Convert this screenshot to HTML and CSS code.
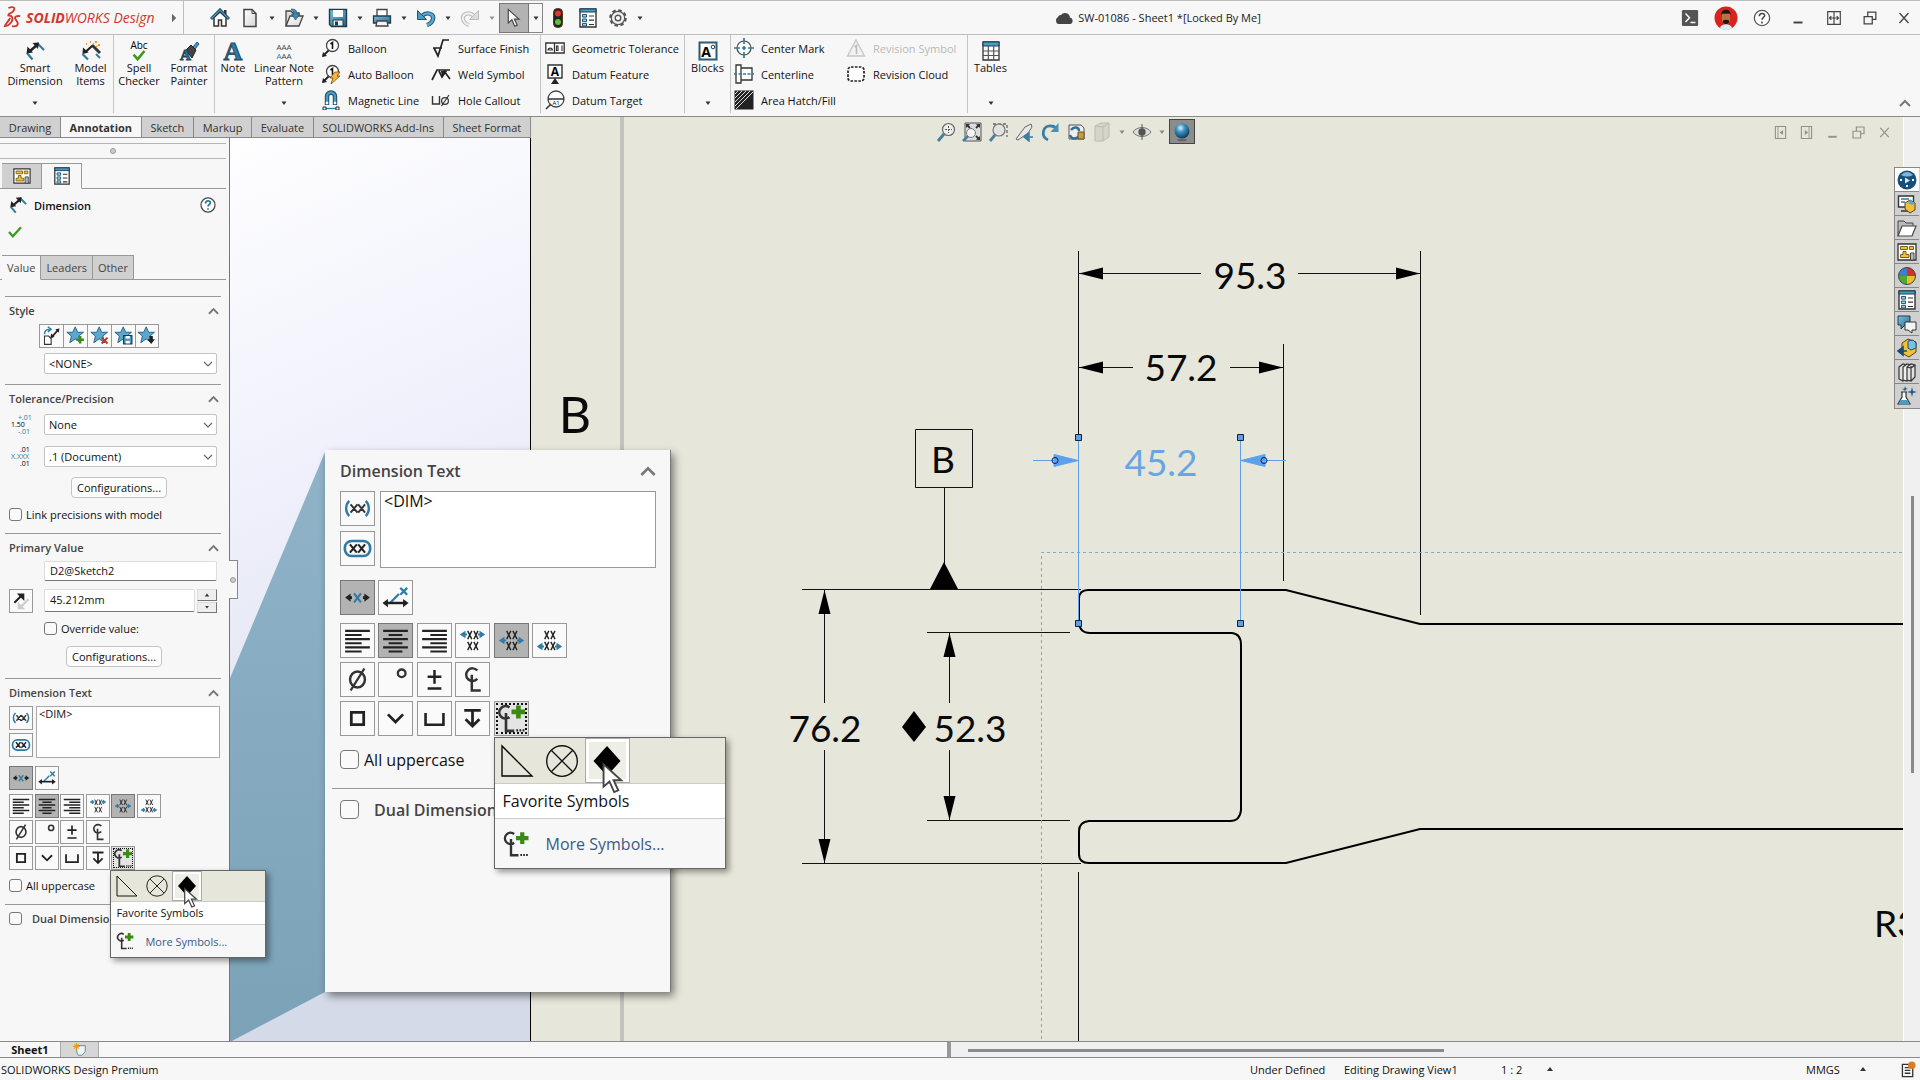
FILE: index.html
```
<!DOCTYPE html>
<html lang="en">
<head>
<meta charset="utf-8">
<title>SOLIDWORKS Design</title>
<link rel="stylesheet" href="styles.css">
</head>
<body>
<svg class="sprite" aria-hidden="true">
  <symbol id="i-caret" viewBox="0 0 8 8"><path d="M1.500 2.500h5L4 6z" fill="#333"/></symbol>
  <symbol id="i-up" viewBox="0 0 8 8"><path d="M1 6h6L4 2z" fill="#333"/></symbol>
  <symbol id="i-chev-up" viewBox="0 0 12 8"><path d="M1 7l5-5 5 5" fill="none" stroke="#777" stroke-width="2"/></symbol>
  <symbol id="i-chev-down" viewBox="0 0 10 6"><path d="M1 1l4 4 4-4" fill="none" stroke="#666" stroke-width="1.200"/></symbol>
  <symbol id="i-home" viewBox="0 0 20 20"><path d="M4 9.500V18h4.500v-6h3v6H16V9.500L10 4z" fill="#fff" stroke="#333" stroke-width="1.500"/><path d="M14 2h2.500v5L14 5z" fill="#333"/><path d="M1 11l9-9 9 9" fill="none" stroke="#1f3f55" stroke-width="3"/><path d="M1.500 10.500L10 2l8.500 8.500" fill="none" stroke="#4a9cc5" stroke-width="1.200"/></symbol>
  <symbol id="i-new" viewBox="0 0 20 20"><path d="M4 1.500h8l4 4v13H4z" fill="url(#paper)" stroke="#444" stroke-width="1.500"/><path d="M12 1.500v4h4" fill="none" stroke="#444"/></symbol>
  <symbol id="i-open" viewBox="0 0 20 20"><path d="M2 18V3h5l2 2h6v3" fill="#ddd" stroke="#444" stroke-width="1.300"/><path d="M2 18L6 8h13l-4 10z" fill="url(#paper)" stroke="#444" stroke-width="1.300"/><path d="M7 1c4 0 6 1 6 5h3l-4.500 6L7.500 6H10c0-2-1-3-3-5z" fill="#3c88b0" stroke="#1b4a66" stroke-width=".6"/></symbol>
  <symbol id="i-save" viewBox="0 0 20 20"><path d="M1.500 1.500h17v17h-15l-2-2z" fill="url(#blueGrad)" stroke="#1e3c50" stroke-width="1.400"/><path d="M5 2h10v7H5z" fill="#fff"/><path d="M5 12h10v6H5z" fill="#eee" stroke="#1e3c50"/><path d="M7 13.500h3v4H7z" fill="#1e3c50"/></symbol>
  <symbol id="i-print" viewBox="0 0 20 20"><path d="M5 1.500h10V9H5z" fill="#fff" stroke="#444" stroke-width="1.300"/><path d="M1.500 8h17v7h-17z" fill="url(#blueGrad)" stroke="#1e3c50" stroke-width="1.300"/><path d="M5 13h10l1 5H4z" fill="#f4f4f4" stroke="#444" stroke-width="1.300"/></symbol>
  <symbol id="i-undo" viewBox="0 0 20 20"><path d="M6 8c5-5 12-2 11 3-.5 3-3 5-6 6" fill="none" stroke="#1e5573" stroke-width="4.400"/><path d="M6 8c5-5 12-2 11 3-.5 3-3 5-6 6" fill="none" stroke="#5aa9d0" stroke-width="2.400"/><path d="M1.500 2.500v9h9z" fill="#4a9cc5" stroke="#1e5573"/></symbol>
  <symbol id="i-redo" viewBox="0 0 20 20"><path d="M14 8C9 3 2 6 3 11c.5 3 3 5 6 6" fill="none" stroke="#bbb" stroke-width="4"/><path d="M14 8C9 3 2 6 3 11c.5 3 3 5 6 6" fill="none" stroke="#eee" stroke-width="2"/><path d="M18.500 2.500v9h-9z" fill="#ddd" stroke="#bbb"/></symbol>
  <symbol id="i-cursor" viewBox="0 0 20 28"><path d="M2 2v19l5-4.500 4 9 3.500-1.500-4-8.500H17z" fill="#fff" stroke="#444" stroke-width="1.600"/></symbol>
  <symbol id="i-light" viewBox="0 0 20 20"><rect x="5.500" y=".5" width="9" height="19" rx="4" fill="#222" stroke="#5a3a20"/><circle cx="10" cy="5.500" r="3" fill="#e8322c"/><circle cx="10" cy="14" r="3" fill="#5cc23c"/></symbol>
  <symbol id="i-list" viewBox="0 0 20 20"><path d="M2 1h16v18H2z" fill="#fff" stroke="#333" stroke-width="1.400"/><path d="M2 1h16v3H2z" fill="#4a9cc5" stroke="#1e3c50"/><path d="M4.500 6.500h4v2.600h-4zM4.500 11h4v2.600h-4zM4.500 15.400h4V18h-4z" fill="#9fd3ec" stroke="#1e5573"/><path d="M11 8h5M11 12.200h5M11 16.500h5" stroke="#333" stroke-width="1.200"/></symbol>
  <symbol id="i-gear" viewBox="0 0 20 20"><circle cx="10" cy="10" r="7.500" fill="none" stroke="#555" stroke-width="2.600" stroke-dasharray="3.400 2.490"/><circle cx="10" cy="10" r="6.700" fill="#f2f2f2" stroke="#555" stroke-width="1.200"/><circle cx="10" cy="10" r="2.800" fill="#fff" stroke="#555" stroke-width="1.400"/></symbol>
  <symbol id="i-cloud" viewBox="0 0 20 14"><path d="M4 13a4 4 0 010-7 3 3 0 013-2 5 5 0 019 2.500A3.400 3.400 0 0116.500 13z" fill="#444"/></symbol>
  <symbol id="i-term" viewBox="0 0 20 20"><rect x="1" y="1" width="18" height="18" rx="1.500" fill="#555"/><path d="M5 5l4.500 4.700L5 14.500M10.500 15H16" fill="none" stroke="#fff" stroke-width="1.600"/></symbol>
  <symbol id="i-avatar" viewBox="0 0 24 24"><circle cx="12" cy="12" r="11.500" fill="#d8231f"/><path d="M6 22c1-5 11-5 12 0-3 2.500-9 2.500-12 0z" fill="#d9eef5"/><path d="M8 8h8v6c0 5-8 5-8 0z" fill="#b9733f"/><path d="M7.500 9c-1-7 10-7 9 0l-1-1.500h-7zM9 14.500c2-1 4-1 6 0v2c-2 2-4 2-6 0z" fill="#1d1715"/></symbol>
  <symbol id="i-help" viewBox="0 0 20 20"><circle cx="10" cy="10" r="8.500" fill="#fff" stroke="#555" stroke-width="1.400"/><path d="M7 8c0-4 6-4 6-.8C13 9.400 10 9.300 10 12M10 14v2" fill="none" stroke="#444" stroke-width="1.700"/></symbol>
  <symbol id="i-helpblue" viewBox="0 0 20 20"><circle cx="10" cy="10" r="8.800" fill="#fff" stroke="#444" stroke-width="1.500"/><path d="M7 8c0-4 6-4 6-.8C13 9.400 10 9.300 10 12M10 14v2" fill="none" stroke="#2f7ba3" stroke-width="2.200"/></symbol>
  <symbol id="i-min" viewBox="0 0 20 20"><path d="M5 15h10" stroke="currentColor" stroke-width="2.200"/></symbol>
  <symbol id="i-span" viewBox="0 0 20 20"><path d="M3 3h14v14H3zM10 3v14M5 10h10M7 8l-2 2 2 2M13 8l2 2-2 2" fill="none" stroke="currentColor" stroke-width="1.300"/></symbol>
  <symbol id="i-restore" viewBox="0 0 20 20"><path d="M7.500 8V3.500h9v8H12M3.500 8.500h9v8h-9z" fill="none" stroke="currentColor" stroke-width="1.400"/></symbol>
  <symbol id="i-close" viewBox="0 0 20 20"><path d="M5 4.500l10 11M15 4.500l-10 11" stroke="currentColor" stroke-width="1.500"/></symbol>
  <symbol id="i-dockl" viewBox="0 0 20 20"><path d="M4 3h12v14H4z" fill="none" stroke="currentColor" stroke-width="1.300"/><path d="M7 3v14" stroke="currentColor"/><path d="M13 7v6l-4-3z" fill="currentColor"/></symbol>
  <symbol id="i-dockr" viewBox="0 0 20 20"><path d="M4 3h12v14H4z" fill="none" stroke="currentColor" stroke-width="1.300"/><path d="M13 3v14" stroke="currentColor"/><path d="M8 7v6l4-3z" fill="currentColor"/></symbol>
  <symbol id="i-smartdim" viewBox="0 0 20 20"><path d="M7.500 18.500L2 12M12 2l7 7" stroke="#2f7ba3" stroke-width="2.200"/><path d="M5 10L12 4" stroke="#222" stroke-width="2.500"/><path d="M1.500 12.500l1-7 5.500 6zM14 1.500l-6.500.5 5.500 6z" fill="#222"/></symbol>
  <symbol id="i-model" viewBox="0 0 20 20"><path d="M7 18.500L1.500 13" stroke="#2f7ba3" stroke-width="2.200"/><path d="M11 4l8 8" stroke="#333" stroke-width="3"/><path d="M4.500 11L11 5" stroke="#222" stroke-width="2.300"/><path d="M1.500 13l.5-6.500 5.500 5z" fill="#222"/><path d="M5 3h1M9 1h1M14 1h2M17 4h2M15 5l1 1M12 2.500l1 1" stroke="#e59a2a" stroke-width="1.800"/><path d="M15 13l4 4" stroke="#2f7ba3" stroke-width="2"/></symbol>
  <symbol id="i-balloon" viewBox="0 0 20 20"><path d="M8 12l-6 6" stroke="#222" stroke-width="1.800"/><path d="M1 19l1-5 4 4z" fill="#222"/><circle cx="11.500" cy="7.500" r="6" fill="#fff" stroke="#444" stroke-width="1.300"/><path d="M9.500 6l2-1.500v6.500" fill="none" stroke="#111" stroke-width="1.600"/></symbol>
  <symbol id="i-bolt" viewBox="0 0 20 20"><path d="M14 8h5l-3 4h3l-9 8 2-6h-3z" fill="#f5b73a" stroke="#7a4a10" stroke-width=".8"/></symbol>
  <symbol id="i-magnet" viewBox="0 0 20 20"><path d="M6 15V6.500a4 4 0 018 0V15" fill="none" stroke="#1e4a63" stroke-width="4.400"/><path d="M6 14V6.500a4 4 0 018 0V14" fill="none" stroke="#4a9cc5" stroke-width="2.400"/><path d="M4.800 13h2.400M12.800 13h2.400" stroke="#fff" stroke-width="2.400"/><path d="M4 18.500h12" stroke="#2f7ba3" stroke-width="1.300"/><path d="M2 17h3v3H2zM15 17h3v3h-3z" fill="#fff" stroke="#222"/></symbol>
  <symbol id="i-surface" viewBox="0 0 20 20"><path d="M2 10h9M3 10l4 8 5-16h6" fill="none" stroke="#222" stroke-width="1.700"/></symbol>
  <symbol id="i-weld" viewBox="0 0 20 20"><path d="M1 16L6 6h13M8 7l3 6 4-6M13 7l6 8" fill="none" stroke="#222" stroke-width="1.700"/><path d="M10 7l1 6 5-6z" fill="#222"/></symbol>
  <symbol id="i-hole" viewBox="0 0 20 20"><path d="M1.500 6v8h7V6" fill="none" stroke="#333" stroke-width="1.400"/><circle cx="14" cy="11" r="3.400" fill="none" stroke="#333" stroke-width="1.200"/><path d="M10.500 16L18 5" stroke="#333" stroke-width="1.200"/></symbol>
  <symbol id="i-center" viewBox="0 0 20 20"><circle cx="10" cy="10" r="7" fill="#fff" stroke="#444" stroke-width="1.200"/><path d="M10 0v6M10 8v4M10 14v6M0 10h6M8 10h4M14 10h6" stroke="#2f7ba3" stroke-width="1.700"/></symbol>
  <symbol id="i-centerline" viewBox="0 0 20 20"><path d="M2 1h5v18H2zM7 4h11v12H7z" fill="#fff" stroke="#333" stroke-width="1.300"/><path d="M0 10h20" stroke="#2f7ba3" stroke-width="1.500" stroke-dasharray="3 1.500"/></symbol>
  <symbol id="i-hatch" viewBox="0 0 20 20"><path d="M.5.500h19v19H.5z" fill="#222"/><path d="M1 4l3-3M1 8l7-7M1 12L12 1M1 16L16 1M2 19L19 2" stroke="#ddd" stroke-width="1"/></symbol>
  <symbol id="i-revsym" viewBox="0 0 20 20"><path d="M10 2l8.500 16h-17z" fill="#f2f2f2" stroke="#c8c8c8" stroke-width="1.400"/><path d="M8.500 9l2-1.500V16" fill="none" stroke="#bbb" stroke-width="1.600"/></symbol>
  <symbol id="i-revcloud" viewBox="0 0 20 20"><rect x="2" y="3" width="16" height="14" rx="3" fill="#fff" stroke="#222" stroke-width="1.700" stroke-dasharray="2.600 1.300"/></symbol>
  <symbol id="i-table" viewBox="0 0 20 20"><path d="M2 1h16v18H2z" fill="#fff" stroke="#333" stroke-width="1.300"/><path d="M2 1h16v4H2z" fill="#4a9cc5" stroke="#1e3c50"/><path d="M2 10h16M2 14.500h16M7.300 5v14M12.700 5v14" stroke="#555" stroke-width="1.200"/></symbol>
  <symbol id="i-tree" viewBox="0 0 20 20"><path d="M1 2h18v16H1z" fill="#fff" stroke="#333" stroke-width="1.300"/><path d="M3.500 4.500h7v3h-7zM12.500 4.500h4v3h-4zM6 9.500h3v3h3v3H3.500v-3H6z" fill="#f2c230" stroke="#6b5310" stroke-width=".9"/><path d="M13.500 11H17v7h-3.500z" fill="#bbb" stroke="#444"/></symbol>
  <symbol id="i-check" viewBox="0 0 16 14"><path d="M1 7l4.500 5L15 1.500" fill="none" stroke="#3d9a1e" stroke-width="2.600"/></symbol>
  <symbol id="i-star" viewBox="0 0 24 24"><path d="M11 1l3 6.500h7L15.500 12l2 8L11 15.500 4.500 20l2-8L1 7.500h7z" fill="#5ba8cf" stroke="#1e5573"/></symbol>

  <symbol id="d-paren" viewBox="0 0 24 24"><path d="M6 6.500c-3 3-3 8 0 11M18 6.500c3 3 3 8 0 11" fill="none" stroke="#2f7ba3" stroke-width="1.700"/><path d="M7 9l5 6M12 9l-5 6M12.500 9l5 6M17.500 9l-5 6" stroke="#333" stroke-width="1.400"/></symbol>
  <symbol id="d-oval" viewBox="0 0 24 24"><rect x="2.800" y="6.500" width="18.400" height="11" rx="5" fill="none" stroke="#2f7ba3" stroke-width="1.900"/><path d="M6.500 9l5 6M11.500 9l-5 6M12.500 9l5 6M17.500 9l-5 6" stroke="#222" stroke-width="1.500"/></symbol>
  <symbol id="d-inline" viewBox="0 0 24 24"><path d="M9.500 9l5 6.500M14.500 9l-5 6.500" stroke="#2f7ba3" stroke-width="1.500"/><path d="M5 12h3M16 12h3" stroke="#222" stroke-width="2"/><path d="M3 12l4-3v6zM21 12l-4-3v6z" fill="#222"/></symbol>
  <symbol id="d-leader" viewBox="0 0 24 24"><path d="M15.500 5l5 5M20.500 5l-5 5M8 16l6.500-6.500" stroke="#2f7ba3" stroke-width="1.600"/><path d="M5 16h14" stroke="#222" stroke-width="1.800"/><path d="M2.500 16l4-3v6zM21.500 16l-4-3v6z" fill="#222"/></symbol>
  <symbol id="d-left" viewBox="0 0 24 24"><path d="M3 5h18M3 8h12M3 11h18M3 14h12M3 17h18M3 20h12" stroke="#222" stroke-width="1.600"/></symbol>
  <symbol id="d-mid" viewBox="0 0 24 24"><path d="M3 5h18M7 8h10M3 11h18M7 14h10M3 17h18M7 20h10" stroke="#222" stroke-width="1.600"/></symbol>
  <symbol id="d-right" viewBox="0 0 24 24"><path d="M3 5h18M9 8h12M3 11h18M9 14h12M3 17h18M9 20h12" stroke="#222" stroke-width="1.600"/></symbol>
  <symbol id="d-xx" viewBox="0 0 24 24"><path d="M8.500 5l3 6M11.500 5l-3 6M13 5l3 6M16 5l-3 6M8.500 13l3 6M11.500 13l-3 6M13 13l3 6M16 13l-3 6" stroke="#222" stroke-width="1"/></symbol>
  <symbol id="d-arrows" viewBox="0 0 24 24"><path d="M3.500 12l3-2v4zM20.500 12l-3-2v4z" fill="#2f7ba3" stroke="#2f7ba3" stroke-width=".8"/><path d="M6 12h2M16 12h2" stroke="#2f7ba3" stroke-width="1.400"/></symbol>
  <symbol id="d-dia" viewBox="0 0 24 24"><ellipse cx="12" cy="12" rx="5.400" ry="5.800" fill="none" stroke="#333" stroke-width="1.800"/><path d="M7 20L17 4" stroke="#333" stroke-width="1.700"/></symbol>
  <symbol id="d-deg" viewBox="0 0 24 24"><circle cx="16.500" cy="7.500" r="2.800" fill="none" stroke="#333" stroke-width="1.700"/></symbol>
  <symbol id="d-pm" viewBox="0 0 24 24"><path d="M12 5v10M7 10h10M7 18.500h10" stroke="#222" stroke-width="1.800"/></symbol>
  <symbol id="d-cl" viewBox="0 0 24 24"><path d="M15.500 5.500a4.600 4.600 0 100 6M11.500 8.500V20h6.500" fill="none" stroke="#333" stroke-width="1.800"/></symbol>
  <symbol id="d-sq" viewBox="0 0 24 24"><path d="M7.500 7.500h9v9h-9z" fill="none" stroke="#222" stroke-width="2"/></symbol>
  <symbol id="d-vee" viewBox="0 0 24 24"><path d="M6.500 9l5.500 5.500L17.500 9" fill="none" stroke="#222" stroke-width="2"/></symbol>
  <symbol id="d-cup" viewBox="0 0 24 24"><path d="M5.500 8v8.500h13V8" fill="none" stroke="#222" stroke-width="1.900"/></symbol>
  <symbol id="d-depth" viewBox="0 0 24 24"><path d="M6 6h12M12 6v11M7 12.500l5 5 5-5" fill="none" stroke="#222" stroke-width="2"/></symbol>
  <symbol id="d-clplus" viewBox="0 0 24 24"><path d="M10.500 4a4.500 4.500 0 100 7M8 8v13h6" fill="none" stroke="#333" stroke-width="1.900"/><path d="M15.500 20.700h6" stroke="#222" stroke-width="1.600" stroke-dasharray="1.300 1"/><path d="M17 2.500v9.500M12 7.200h10" stroke="#3b8a14" stroke-width="3.400"/></symbol>
  <symbol id="d-tri" viewBox="0 0 24 24"><path d="M2 2v20h20z" fill="none" stroke="#000" stroke-width=".9"/></symbol>
  <symbol id="d-cross" viewBox="0 0 24 24"><circle cx="12" cy="12" r="10.200" fill="none" stroke="#111" stroke-width=".9"/><path d="M5 5l14 14M19 5L5 19" stroke="#111" stroke-width=".9"/></symbol>
  <symbol id="d-diamond" viewBox="0 0 24 24"><path d="M12 2l9 10-9 10-9-10z" fill="#000"/></symbol>

  <symbol id="v-zoom" viewBox="0 0 20 20"><path d="M8 12l-6 7" stroke="#4a7f9c" stroke-width="3"/><circle cx="12.500" cy="7.500" r="6" fill="#eee" stroke="#666" stroke-width="1.200"/><path d="M12.500 4v7M9 7.500h7" stroke="#555" stroke-dasharray="2 1"/></symbol>
  <symbol id="v-fit" viewBox="0 0 20 20"><path d="M3 1h16v18H3z" fill="#ddd" stroke="#555"/><path d="M8 6L5 3M14 6l3-3M14 14l3 3" stroke="#333" stroke-width="1.800"/><path d="M4 2h4L4 6zM18 2h-4l4 4zM18 18h-4l4-4z" fill="#333"/><circle cx="9" cy="11" r="4.500" fill="#f3f3f3" stroke="#777"/><path d="M6 14l-5 5" stroke="#4a7f9c" stroke-width="2.600"/></symbol>
  <symbol id="v-area" viewBox="0 0 20 20"><path d="M5 2h14v13" fill="none" stroke="#666" stroke-width="1.300" stroke-dasharray="3 2"/><circle cx="11" cy="8" r="6" fill="#e2e2e2" stroke="#777" stroke-width="1.200"/><path d="M7 13l-5 6" stroke="#4a7f9c" stroke-width="2.800"/></symbol>
  <symbol id="v-prev" viewBox="0 0 20 20"><path d="M2 17l9-12 6-3 1 3-4 6-10 7z" fill="#e8e8e8" stroke="#666"/><path d="M19 15h-6M15 11l-5 4 5 4z" fill="#3c7ea3" stroke="#3c7ea3" stroke-width="1.500"/></symbol>
  <symbol id="v-rot" viewBox="0 0 20 20"><path d="M8 18C0 14 3 3 11 4c2 0 4 1 5 2.500" fill="none" stroke="#3c7ea3" stroke-width="2.800"/><path d="M18.500 1v9h-8z" fill="#4a8fb5"/></symbol>
  <symbol id="v-sheet" viewBox="0 0 20 20"><path d="M3 3h12l3 3v11H3z" fill="#eee" stroke="#555"/><path d="M5 8c3-4 8-3 8 1M13 14c-3 4-8 3-9-1" fill="none" stroke="#2f6f96" stroke-width="2.400"/><path d="M12 10h6v7h-6z" fill="#c79a45" stroke="#6e5320"/></symbol>
  <symbol id="v-box" viewBox="0 0 20 20"><path d="M3 4l6-3h8v14l-6 4H3z" fill="#d5d5ca" stroke="#bbb"/><path d="M11 5v14M3 4l8 1 6-4" fill="none" stroke="#bdbdb2"/></symbol>
  <symbol id="v-eye" viewBox="0 0 20 20"><path d="M1 10c4-6 14-6 18 0-4 6-14 6-18 0z" fill="#ddd" stroke="#777"/><circle cx="10" cy="10" r="3.700" fill="#555"/><path d="M10 2v16" stroke="#555"/></symbol>
  <symbol id="v-ball" viewBox="0 0 20 20"><circle cx="10" cy="9" r="7.500" fill="url(#ballGrad)"/><ellipse cx="10" cy="18" rx="5" ry="1.200" fill="#666"/></symbol>
  <symbol id="t-compass" viewBox="0 0 20 20"><circle cx="10" cy="10" r="9.500" fill="#174e7a"/><path d="M4 5c4-4 8-4 12 0-4 2-8 2-12 0z" fill="#7fb7dc"/><path d="M8 7.500l5 3-5 3z" fill="#cfe9fa"/><path d="M3 10h2M15 10h2M9 16h2" stroke="#fff" stroke-width="2"/></symbol>
  <symbol id="t-lib" viewBox="0 0 20 20"><path d="M1.500 2h15v11h-15zM4 17h7" fill="#fff" stroke="#333" stroke-width="1.400"/><path d="M4 5h8M4 8h4" stroke="#2f7ba3" stroke-width="1.400"/><path d="M8 9l5-3 5 3v7l-5 3-5-4z" fill="#efc13b" stroke="#5b4512"/><path d="M13 6l5 3-3 2-4-2z" fill="#5aa9d0"/></symbol>
  <symbol id="t-folder" viewBox="0 0 20 20"><path d="M1 18V3h6l2 2h7v3" fill="#bbb" stroke="#444"/><path d="M1 18L5 8h14l-4 10z" fill="#fff" stroke="#444" stroke-width="1.200"/></symbol>
  <symbol id="t-color" viewBox="0 0 20 20"><path d="M10 10V1.500a8.500 8.500 0 00-8.500 8.500z" fill="#3c7fd0"/><path d="M10 10V1.500a8.500 8.500 0 018.500 8.500z" fill="#d6302b"/><path d="M10 10h8.500a8.500 8.500 0 01-8.500 8.500z" fill="#e8c22d"/><path d="M10 10H1.500a8.500 8.500 0 008.500 8.500z" fill="#4fa82f"/><circle cx="10" cy="10" r="8.500" fill="none" stroke="#444"/></symbol>
  <symbol id="t-chat" viewBox="0 0 20 20"><path d="M1 2h12v9H8l-4 4v-4H1z" fill="url(#blueGrad)" stroke="#1e3c50"/><path d="M8 8h11v8h-4v3l-4-3H8z" fill="#f4f4f4" stroke="#333"/></symbol>
  <symbol id="t-part" viewBox="0 0 20 20"><path d="M5 5l6-4 8 3v10l-7 5-7-4z" fill="#efc13b" stroke="#5b4512"/><path d="M11 3l5-1 3 3v5l-5 2-3-2z" fill="#7cc0e0" stroke="#1e5573"/><path d="M10 13H5M6 9l-5 4 5 4z" fill="#1e4a6b" stroke="#1e4a6b" stroke-width="1.600"/></symbol>
  <symbol id="t-books" viewBox="0 0 20 20"><path d="M2 5l4-3 4 1v14l-4 2-4-2z" fill="#e2e2e2" stroke="#333" stroke-width="1.200"/><path d="M6 5l4-3 4 1v13l-4 3-4-1z" fill="#eee" stroke="#333" stroke-width="1.200"/><path d="M10 5l4-3 4 1v12l-4 4-4-1zM14 6v13M10 5l4 1 4-3" fill="#e2e2e2" stroke="#333" stroke-width="1.200"/></symbol>
  <symbol id="t-flask" viewBox="0 0 20 20"><path d="M5 6v5l-4 7h12l-4-7V6M4 6h6" fill="#fff" stroke="#333" stroke-width="1.200"/><path d="M3.500 14h7l2 4h-11z" fill="#4a9cc5"/><path d="M15 1l1 4 4 1-4 1-1 4-1-4-4-1 4-1zM8 0l.6 2L11 3l-2.400.5L8 6l-.6-2L5 3l2.400-.6z" fill="#1e5a86"/></symbol>
</svg>

<div class="app">
  <header class="titlebar">
    <div class="brand">
      <svg class="ds" viewBox="0 0 22 28" aria-hidden="true"><path d="M7 3c5-2 9-1 5 4-1 1-3 2-5 3M6 11c7 0 7 6 2 10-2 2-4 2-5 2 1-3 4-5 6-9M20 12c-6-1-7 2-4 5 3 4 1 7-5 6" fill="none" stroke="#d0382e" stroke-width="2"/></svg>
      <span class="wordmark"><b>SOLID</b>WORKS Design</span>
      <svg class="brand-arrow" viewBox="0 0 6 10" aria-hidden="true"><path d="M0 0l5 5-5 5z" fill="#666"/></svg>
    </div>
    <nav class="quick" aria-label="Quick access">
      <button class="q" aria-label="Home"><svg><use href="#i-home"/></svg></button>
      <button class="q" aria-label="New"><svg><use href="#i-new"/></svg></button><button class="qc" aria-label="New options"><svg><use href="#i-caret"/></svg></button>
      <button class="q" aria-label="Open"><svg><use href="#i-open"/></svg></button><button class="qc" aria-label="Open options"><svg><use href="#i-caret"/></svg></button>
      <button class="q" aria-label="Save"><svg><use href="#i-save"/></svg></button><button class="qc" aria-label="Save options"><svg><use href="#i-caret"/></svg></button>
      <button class="q" aria-label="Print"><svg><use href="#i-print"/></svg></button><button class="qc" aria-label="Print options"><svg><use href="#i-caret"/></svg></button>
      <button class="q" aria-label="Undo"><svg><use href="#i-undo"/></svg></button><button class="qc" aria-label="Undo options"><svg><use href="#i-caret"/></svg></button>
      <button class="q" aria-label="Redo" disabled><svg><use href="#i-redo"/></svg></button><button class="qc faded" aria-label="Redo options"><svg><use href="#i-caret"/></svg></button>
      <button class="q pressed" aria-label="Select"><svg><use href="#i-cursor"/></svg></button><button class="qc boxed" aria-label="Select options"><svg><use href="#i-caret"/></svg></button>
      <button class="q" aria-label="Rebuild"><svg><use href="#i-light"/></svg></button>
      <button class="q" aria-label="File properties"><svg><use href="#i-list"/></svg></button>
      <button class="q" aria-label="Options"><svg><use href="#i-gear"/></svg></button><button class="qc" aria-label="Options menu"><svg><use href="#i-caret"/></svg></button>
    </nav>
    <h1 class="doc-title"><svg><use href="#i-cloud"/></svg>SW-01086 - Sheet1 *[Locked By Me]</h1>
    <div class="window-tools">
      <button aria-label="Console"><svg><use href="#i-term"/></svg></button>
      <button class="avatar" aria-label="Account"><svg><use href="#i-avatar"/></svg></button>
      <button aria-label="Help"><svg><use href="#i-help"/></svg></button>
      <button aria-label="Minimize"><svg><use href="#i-min"/></svg></button>
      <button aria-label="Span displays"><svg><use href="#i-span"/></svg></button>
      <button aria-label="Restore"><svg><use href="#i-restore"/></svg></button>
      <button aria-label="Close"><svg><use href="#i-close"/></svg></button>
    </div>
  </header>

  <section class="ribbon" aria-label="Annotation commands">
    <div class="group g-dim">
      <button class="big w-l"><svg><use href="#i-smartdim"/></svg><span>Smart<br>Dimension</span><svg class="caret"><use href="#i-caret"/></svg></button>
      <button class="big w-t"><svg><use href="#i-model"/></svg><span>Model<br>Items</span></button>
    </div>
    <div class="group">
      <button class="big w-m"><svg viewBox="0 0 22 22"><text x="11" y="9" text-anchor="middle" class="g-text" font-size="11">Abc</text><path d="M5 15l4.500 5L17 11" fill="none" stroke="#3d9a1e" stroke-width="2.800"/></svg><span>Spell<br>Checker</span></button>
      <button class="big w-m"><svg viewBox="0 0 20 20"><path d="M14 6l4-5 2 2-4 5z" fill="#4a9cc5" stroke="#1e5573"/><path d="M7 9l5-5 5 5-4 8z" fill="#444" stroke="#222"/><text x="1" y="19" class="g-serif" font-size="15">A</text></svg><span>Format<br>Painter</span></button>
    </div>
    <div class="group">
      <button class="big w-s"><svg viewBox="0 0 20 20"><text x="10" y="19" text-anchor="middle" class="g-serif" font-size="26">A</text></svg><span>Note</span></button>
      <button class="big w-l"><svg viewBox="0 0 20 20"><g text-anchor="middle" class="g-text" font-size="8" fill="#444"><text x="10" y="9">AAA</text><text x="10" y="18"><tspan fill="#2f7ba3">A</tspan>AA</text></g></svg><span>Linear Note<br>Pattern</span><svg class="caret"><use href="#i-caret"/></svg></button>
      <div class="stack s-balloon">
        <button><svg><use href="#i-balloon"/></svg>Balloon</button>
        <button><svg><use href="#i-balloon"/><use href="#i-bolt"/></svg>Auto Balloon</button>
        <button><svg><use href="#i-magnet"/></svg>Magnetic Line</button>
      </div>
      <div class="stack s-surface">
        <button><svg><use href="#i-surface"/></svg>Surface Finish</button>
        <button><svg><use href="#i-weld"/></svg>Weld Symbol</button>
        <button><svg><use href="#i-hole"/></svg>Hole Callout</button>
      </div>
    </div>
    <div class="group">
      <div class="stack s-geo">
        <button><svg viewBox="0 0 20 20"><path d="M.8 5h18.400v10H.8zM9.500 5v10" fill="#fff" stroke="#333" stroke-width="1.300"/><path d="M3 12h4.500a2.300 2.300 0 00-4.500 0z" fill="none" stroke="#333" stroke-width="1.200"/><path d="M11.500 8h1.500v4.500h-1.500zM17 7.500v5.500" fill="none" stroke="#333" stroke-width="1.100"/></svg>Geometric Tolerance</button>
        <button><svg viewBox="0 0 20 20"><path d="M3 1h14v13H3z" fill="#fff" stroke="#333" stroke-width="1.400"/><path d="M10 14l4 6H6z" fill="#222"/><text x="10" y="12" text-anchor="middle" class="g-text g-bold" font-size="12">A</text></svg>Datum Feature</button>
        <button><svg viewBox="0 0 20 20"><circle cx="11" cy="9" r="8" fill="#fff" stroke="#444" stroke-width="1.300"/><path d="M3 9h16M6 14l-5 5" stroke="#333" stroke-width="1.500"/><text x="11" y="15" text-anchor="middle" class="g-text" font-size="6">A1</text></svg>Datum Target</button>
      </div>
    </div>
    <div class="group">
      <button class="big w-t"><svg viewBox="0 0 20 20"><path d="M1.500 1.500h17v17h-17z" fill="#fff" stroke="#2c5d78" stroke-width="2"/><text x="8" y="16" text-anchor="middle" class="g-text g-bold" font-size="14">A</text><circle cx="15" cy="6" r="1.800" fill="none" stroke="#333"/></svg><span>Blocks</span><svg class="caret"><use href="#i-caret"/></svg></button>
    </div>
    <div class="group">
      <div class="stack s-center">
        <button><svg><use href="#i-center"/></svg>Center Mark</button>
        <button><svg><use href="#i-centerline"/></svg>Centerline</button>
        <button><svg><use href="#i-hatch"/></svg>Area Hatch/Fill</button>
      </div>
      <div class="stack s-rev">
        <button disabled><svg><use href="#i-revsym"/></svg>Revision Symbol</button>
        <button><svg><use href="#i-revcloud"/></svg>Revision Cloud</button>
      </div>
    </div>
    <div class="group last">
      <button class="big w-t"><svg><use href="#i-table"/></svg><span>Tables</span><svg class="caret"><use href="#i-caret"/></svg></button>
    </div>
    <button class="collapse" aria-label="Collapse ribbon"><svg><use href="#i-chev-up"/></svg></button>
  </section>

  <main class="workspace">
    <svg class="canvas" aria-label="Drawing sheet">
      <defs>
        <linearGradient id="blueGrad" x1="0" y1="0" x2="1" y2="1"><stop offset="0" stop-color="#7fc0dd"/><stop offset="1" stop-color="#23668c"/></linearGradient>
        <radialGradient id="ballGrad" cx=".4" cy=".3" r=".7"><stop offset="0" stop-color="#d8f3ff"/><stop offset=".4" stop-color="#3c93c2"/><stop offset="1" stop-color="#0d3c5c"/></radialGradient>
        <linearGradient id="paper" x1="0" y1="0" x2="1" y2="1"><stop offset="0" stop-color="#fff"/><stop offset="1" stop-color="#d6d6d6"/></linearGradient>
        <linearGradient id="sky" x1="0" y1="0" x2=".25" y2="1"><stop offset=".1" stop-color="#fff"/><stop offset=".5" stop-color="#eff0fb"/><stop offset="1" stop-color="#d5dae8"/></linearGradient>
        <linearGradient id="wedge" x1="0" y1="0" x2="0" y2="1"><stop offset="0" stop-color="#90b3c8"/><stop offset="1" stop-color="#7ba2b7"/></linearGradient>
      </defs>
      <g transform="translate(0 -117)">
        <path d="M0 117h530v930H0z" fill="url(#sky)"/>
        <path d="M325 452L230 678v364l95-50z" fill="url(#wedge)"/>
        <path d="M530.500 117v930" stroke="#000"/>
        <path d="M622 117v930" stroke="#c2c2be" stroke-width="4"/>
        <g class="thin">
          <path d="M1078.500 251v186M1420.500 251v364M1283.500 344v237M1078.500 872v175"/>
          <path d="M1079 273.500h122M1298 273.500h122M1079 367.500h54M1230 367.500h53"/>
          <path d="M802 589.500h279M802 863.500h279M927 632.500h143M927 820.500h143"/>
          <path d="M824.500 590v113M824.500 750v113M949.500 633v70M949.500 750v70"/>
          <path d="M915.500 429.500h57v58h-57zM944.500 488v76"/>
        </g>
        <g class="solid">
          <path d="M1079 273.500l24-6v12zM1420 273.500l-24-6v12zM1079 367.500l24-6v12zM1283 367.500l-24-6v12z"/>
          <path d="M824.500 590l-6 24h12zM824.500 863l-6-24h12zM949.500 633l-6 24h12zM949.500 820l-6-24h12z"/>
          <path d="M944 562l14 27h-28zM914 711l12 16-12 15-12-15z"/>
        </g>
        <path d="M3000 552.500H1041.500V1047" fill="none" stroke="#7aaad6" stroke-dasharray="3 3"/>
        <path class="outline" d="M3000 624H1420L1286 590H1088Q1079 590 1079 599V623Q1080 633 1090 633H1232Q1241 634 1241 645V810Q1240 821 1230 821H1089Q1079 822 1079 831V854Q1079 863 1089 863H1286L1420 829H3000"/>
        <g class="picked">
          <path d="M1078.500 437v186M1240.500 437v186M1033 460.500h45M1241 460.500h45"/>
          <path class="pickfill" d="M1078 460.500l-24-6v12zM1241 460.500l24-6v12z"/>
          <circle cx="1055" cy="460.500" r="3"/><circle cx="1264" cy="460.500" r="3"/>
          <path class="handle" d="M1075.500 434.500h6v6h-6zM1237.500 434.500h6v6h-6zM1075.500 620.500h6v6h-6zM1237.500 620.500h6v6h-6z"/>
        </g>
        <g class="dimtxt">
          <text x="1250" y="289">95.3</text>
          <text x="1181" y="381">57.2</text>
          <text class="blue" x="1161" y="476">45.2</text>
          <text x="943" y="473">B</text>
          <text x="825" y="742">76.2</text>
          <text x="970" y="742">52.3</text>
          <text class="zone" x="575" y="433">B</text>
          <text class="start" x="1874" y="937">R3</text>
        </g>
      </g>
    </svg>

    <div class="topline">
      <nav class="cmd-tabs" aria-label="Command tabs">
        <button>Drawing</button><button class="on">Annotation</button><button>Sketch</button><button>Markup</button><button>Evaluate</button><button>SOLIDWORKS Add-Ins</button><button>Sheet Format</button>
      </nav>
      <div class="heads-up">
        <button aria-label="Zoom"><svg><use href="#v-zoom"/></svg></button>
        <button aria-label="Zoom to fit"><svg><use href="#v-fit"/></svg></button>
        <button aria-label="Zoom to area"><svg><use href="#v-area"/></svg></button>
        <button aria-label="Previous view"><svg><use href="#v-prev"/></svg></button>
        <button aria-label="Rotate view"><svg><use href="#v-rot"/></svg></button>
        <button aria-label="Sheet view"><svg><use href="#v-sheet"/></svg></button>
        <button aria-label="Display style"><svg><use href="#v-box"/></svg></button><button class="hc" aria-label="Display style menu"><svg><use href="#i-caret"/></svg></button>
        <button aria-label="Hide or show"><svg><use href="#v-eye"/></svg></button><button class="hc" aria-label="Hide or show menu"><svg><use href="#i-caret"/></svg></button>
        <button class="ball" aria-label="View settings"><svg><use href="#v-ball"/></svg></button>
      </div>
      <div class="doc-tools">
        <button aria-label="Previous pane"><svg><use href="#i-dockl"/></svg></button>
        <button aria-label="Next pane"><svg><use href="#i-dockr"/></svg></button>
        <button aria-label="Minimize document"><svg><use href="#i-min"/></svg></button>
        <button aria-label="Restore document"><svg><use href="#i-restore"/></svg></button>
        <button aria-label="Close document"><svg><use href="#i-close"/></svg></button>
      </div>
    </div>

    <aside class="panel">
      <div class="grip"><i></i></div>
      <div class="icon-tabs"><button aria-label="Feature tree"><svg><use href="#i-tree"/></svg></button><button class="on" aria-label="Properties"><svg><use href="#i-list"/></svg></button></div>
      <div class="panel-title"><svg><use href="#i-smartdim"/></svg><h2>Dimension</h2><button aria-label="Help"><svg><use href="#i-helpblue"/></svg></button></div>
      <button class="accept" aria-label="Accept"><svg><use href="#i-check"/></svg></button>
      <div class="value-tabs"><button class="on">Value</button><button>Leaders</button><button>Other</button></div>

      <section class="sec first">
        <h3>Style<svg><use href="#i-chev-up"/></svg></h3>
        <div class="style-btns">
          <button aria-label="Apply default"><svg viewBox="0 0 24 24"><path d="M3 12h5l3 3v7H3z" fill="#fff" stroke="#333" stroke-width="1.300"/><path d="M3 10c0-4 2-6 6-6M7 1l4 3-4 3" fill="none" stroke="#2f7ba3" stroke-width="1.700"/><path d="M12 13l7-8" stroke="#222" stroke-width="2"/><path d="M10 15l1-6 4 4zM21 3l-5 1 4 4z" fill="#222"/></svg></button>
          <button aria-label="Add style"><svg viewBox="0 0 24 24"><use href="#i-star"/><path d="M17 12v9M12.500 16.500h9" stroke="#3b8a14" stroke-width="3"/></svg></button>
          <button aria-label="Delete style"><svg viewBox="0 0 24 24"><use href="#i-star"/><path d="M14 14l7 7M21 14l-7 7" stroke="#c8321a" stroke-width="2.400"/></svg></button>
          <button aria-label="Save style"><svg viewBox="0 0 24 24"><use href="#i-star"/><path d="M11.500 11.500h10v10h-10z" fill="#4a9cc5" stroke="#1e3c50" stroke-width="1.400"/><path d="M14 12h5v3h-5zM14 18h5v3h-5z" fill="#fff"/></svg></button>
          <button aria-label="Load style"><svg viewBox="0 0 24 24"><use href="#i-star"/><path d="M17 12v5" stroke="#222" stroke-width="4"/><path d="M12.500 16h9L17 21.500z" fill="#222"/></svg></button>
        </div>
        <div class="pick style-pick"><select aria-label="Style"><option>&lt;NONE&gt;</option></select><svg><use href="#i-chev-down"/></svg></div>
      </section>

      <section class="sec tol">
        <h3>Tolerance/Precision<svg><use href="#i-chev-up"/></svg></h3>
        <div class="frow"><svg viewBox="0 0 20 20"><g class="g-text" font-size="7"><text x="7" y="5" fill="#2f7ba3">+.01</text><text x="0" y="12">1.50</text><text x="7" y="19" fill="#2f7ba3">-.01</text></g></svg><div class="pick"><select aria-label="Tolerance type"><option>None</option></select><svg><use href="#i-chev-down"/></svg></div></div>
        <div class="frow"><svg viewBox="0 0 20 20"><g class="g-text" font-size="7"><text x="9" y="5">.01</text><text x="0" y="12" fill="#2f7ba3">X.XXX</text><text x="9" y="19">.01</text></g></svg><div class="pick"><select aria-label="Unit precision"><option>.1 (Document)</option></select><svg><use href="#i-chev-down"/></svg></div></div>
        <button class="cfg cfg-a">Configurations...</button>
        <label class="tick"><input type="checkbox">Link precisions with model</label>
      </section>

      <section class="sec primary">
        <h3>Primary Value<svg><use href="#i-chev-up"/></svg></h3>
        <input class="txt" type="text" aria-label="Dimension name" value="D2@Sketch2">
        <div class="value-row">
          <button class="rev" aria-label="Reverse direction"><svg viewBox="0 0 24 24"><path d="M21 10l-9 9" stroke="#ccc" stroke-width="2.500"/><path d="M8 13v9h9z" fill="#ccc"/><path d="M4 14L13 5" stroke="#222" stroke-width="2.500"/><path d="M7 3h9v9z" fill="#222"/></svg></button>
          <input class="txt" type="text" aria-label="Dimension value" value="45.212mm">
          <div class="spin"><button aria-label="Increase"><svg><use href="#i-up"/></svg></button><button aria-label="Decrease"><svg><use href="#i-caret"/></svg></button></div>
        </div>
        <label class="tick over"><input type="checkbox">Override value:</label>
        <button class="cfg cfg-b">Configurations...</button>
      </section>

      <section class="sec dim">
        <h3>Dimension Text<svg><use href="#i-chev-up"/></svg></h3>
        <div class="edit"><div class="edit-btns"><button class="b" aria-label="Add parentheses"><svg><use href="#d-paren"/></svg></button><button class="b" aria-label="Inspection dimension"><svg><use href="#d-oval"/></svg></button></div><textarea aria-label="Dimension text">&lt;DIM&gt;</textarea></div>
        <div class="brow place"><button class="b on" aria-label="Center dimension"><svg><use href="#d-inline"/></svg></button><button class="b" aria-label="Offset text"><svg><use href="#d-leader"/></svg></button></div>
        <div class="brow"><button class="b" aria-label="Align left"><svg><use href="#d-left"/></svg></button><button class="b on" aria-label="Align center"><svg><use href="#d-mid"/></svg></button><button class="b" aria-label="Align right"><svg><use href="#d-right"/></svg></button><button class="b" aria-label="Top"><svg><use href="#d-xx"/><use href="#d-arrows" y="-4"/></svg></button><button class="b on" aria-label="Middle"><svg><use href="#d-xx"/><use href="#d-arrows"/></svg></button><button class="b" aria-label="Bottom"><svg><use href="#d-xx"/><use href="#d-arrows" y="4"/></svg></button></div>
        <div class="brow"><button class="b" aria-label="Diameter"><svg><use href="#d-dia"/></svg></button><button class="b" aria-label="Degree"><svg><use href="#d-deg"/></svg></button><button class="b" aria-label="Plus minus"><svg><use href="#d-pm"/></svg></button><button class="b" aria-label="Centerline"><svg><use href="#d-cl"/></svg></button></div>
        <div class="brow"><button class="b" aria-label="Square"><svg><use href="#d-sq"/></svg></button><button class="b" aria-label="Countersink"><svg><use href="#d-vee"/></svg></button><button class="b" aria-label="Counterbore"><svg><use href="#d-cup"/></svg></button><button class="b" aria-label="Depth"><svg><use href="#d-depth"/></svg></button>
          <div class="more"><button class="b focus" aria-label="More symbols"><svg><use href="#d-clplus"/></svg></button>
            <div class="popup"><div class="favs"><button aria-label="Right triangle"><svg><use href="#d-tri"/></svg></button><button aria-label="Crossed circle"><svg><use href="#d-cross"/></svg></button><button class="on" aria-label="Diamond"><svg><use href="#d-diamond"/></svg></button></div><p>Favorite Symbols</p><a href="#more"><svg><use href="#d-clplus"/></svg>More Symbols...</a><svg class="mouse" aria-hidden="true"><use href="#i-cursor"/></svg></div>
          </div></div>
        <label class="tick upper"><input type="checkbox">All uppercase</label>
      </section>
      <section class="sec dual"><label class="tick"><input type="checkbox">Dual Dimension</label></section>
      <button class="splitter" aria-label="Collapse panel"><i></i></button>
    </aside>

    <aside class="callout large">
      <section class="dim">
        <h3>Dimension Text<svg><use href="#i-chev-up"/></svg></h3>
        <div class="edit"><div class="edit-btns"><button class="b" aria-label="Add parentheses"><svg><use href="#d-paren"/></svg></button><button class="b" aria-label="Inspection dimension"><svg><use href="#d-oval"/></svg></button></div><textarea aria-label="Dimension text">&lt;DIM&gt;</textarea></div>
        <div class="brow place"><button class="b on" aria-label="Center dimension"><svg><use href="#d-inline"/></svg></button><button class="b" aria-label="Offset text"><svg><use href="#d-leader"/></svg></button></div>
        <div class="brow"><button class="b" aria-label="Align left"><svg><use href="#d-left"/></svg></button><button class="b on" aria-label="Align center"><svg><use href="#d-mid"/></svg></button><button class="b" aria-label="Align right"><svg><use href="#d-right"/></svg></button><button class="b" aria-label="Top"><svg><use href="#d-xx"/><use href="#d-arrows" y="-6"/></svg></button><button class="b on" aria-label="Middle"><svg><use href="#d-xx"/><use href="#d-arrows"/></svg></button><button class="b" aria-label="Bottom"><svg><use href="#d-xx"/><use href="#d-arrows" y="6"/></svg></button></div>
        <div class="brow"><button class="b" aria-label="Diameter"><svg><use href="#d-dia"/></svg></button><button class="b" aria-label="Degree"><svg><use href="#d-deg"/></svg></button><button class="b" aria-label="Plus minus"><svg><use href="#d-pm"/></svg></button><button class="b" aria-label="Centerline"><svg><use href="#d-cl"/></svg></button></div>
        <div class="brow"><button class="b" aria-label="Square"><svg><use href="#d-sq"/></svg></button><button class="b" aria-label="Countersink"><svg><use href="#d-vee"/></svg></button><button class="b" aria-label="Counterbore"><svg><use href="#d-cup"/></svg></button><button class="b" aria-label="Depth"><svg><use href="#d-depth"/></svg></button>
          <div class="more"><button class="b focus" aria-label="More symbols"><svg><use href="#d-clplus"/></svg></button>
            <div class="popup"><div class="favs"><button aria-label="Right triangle"><svg><use href="#d-tri"/></svg></button><button aria-label="Crossed circle"><svg><use href="#d-cross"/></svg></button><button class="on" aria-label="Diamond"><svg><use href="#d-diamond"/></svg></button></div><p>Favorite Symbols</p><a href="#more"><svg><use href="#d-clplus"/></svg>More Symbols...</a><svg class="mouse" aria-hidden="true"><use href="#i-cursor"/></svg></div>
          </div></div>
        <label class="tick upper"><input type="checkbox">All uppercase</label>
      </section>
      <section class="dual"><label class="tick"><input type="checkbox">Dual Dimension</label></section>
    </aside>

    <div class="vscroll"><i></i></div>
    <nav class="taskpane" aria-label="Task pane">
      <button class="on" aria-label="Platform"><svg><use href="#t-compass"/></svg></button>
      <button aria-label="Resources"><svg><use href="#t-lib"/></svg></button>
      <button aria-label="File explorer"><svg><use href="#t-folder"/></svg></button>
      <button aria-label="View palette"><svg><use href="#i-tree"/></svg></button>
      <button aria-label="Appearances"><svg><use href="#t-color"/></svg></button>
      <button aria-label="Custom properties"><svg><use href="#i-list"/></svg></button>
      <button aria-label="Forum"><svg><use href="#t-chat"/></svg></button>
      <button aria-label="Parts"><svg><use href="#t-part"/></svg></button>
      <button aria-label="Library"><svg><use href="#t-books"/></svg></button>
      <button aria-label="Labs"><svg><use href="#t-flask"/></svg></button>
    </nav>
  </main>

  <div class="sheetbar">
    <button class="sheet on">Sheet1</button>
    <button class="sheet add" aria-label="Add sheet"><svg viewBox="0 0 16 16"><path d="M4 3h10v7l-4 4H6c-2-3-2-6-2-11z" fill="#eef3f7" stroke="#5d7f95"/><path d="M4 0v8M0 4h8M1.500 1.500l5 5M6.500 1.500l-5 5" stroke="#ec9a24" stroke-width="1.300"/></svg></button>
    <div class="track"></div>
    <div class="hscroll"><i></i></div>
  </div>

  <footer class="status">
    <span class="st-app">SOLIDWORKS Design Premium</span>
    <span class="st-def">Under Defined</span>
    <span class="st-edit">Editing Drawing View1</span>
    <span class="st-scale">1 : 2</span>
    <svg class="st-up"><use href="#i-up"/></svg>
    <span class="st-unit">MMGS</span>
    <svg class="st-up2"><use href="#i-up"/></svg>
    <svg class="st-note" viewBox="0 0 16 18"><path d="M1.500 3.500h11v13h-11zM4 7h6M4 10h6M4 13h6" fill="none" stroke="#333" stroke-width="1.400"/><circle cx="11.500" cy="4.500" r="4" fill="#dd7d1c"/></svg>
  </footer>
</div>
</body>
</html>
```
FILE: styles.css
```
* { box-sizing: border-box; }
body { margin: 0; font: 11px/13px "Open Sans", "Noto Sans", sans-serif; color: #111; background: #f7f7f7; overflow: hidden; }
button { font: inherit; color: inherit; background: none; border: 0; padding: 0; margin: 0; display: flex; align-items: center; justify-content: center; }
h1, h2, h3, p { margin: 0; font: inherit; }
svg { flex: none; display: block; }
.sprite { display: none; }
.g-text { font-family: "Open Sans", sans-serif; }
.g-bold { font-weight: 700; }
.g-serif { font-family: "Liberation Serif", serif; font-weight: 700; fill: #2f7ba3; stroke: #1e4a63; stroke-width: 1px; }

.app { height: 100vh; display: flex; flex-direction: column; }

/* title bar */
.titlebar { height: 35px; flex: none; display: flex; align-items: stretch; border-top: 1px solid #bdbdbd; border-bottom: 1px solid #bdbdbd; background: #f7f7f7; }
.brand { width: 184px; display: flex; align-items: center; border-right: 1px solid #bdbdbd; padding-left: 2px; color: #d0382e; }
.ds { width: 20px; height: 26px; }
.wordmark { font: italic 14px/20px "Open Sans", sans-serif; margin-left: 4px; flex: 1; white-space: nowrap; }
.brand-arrow { width: 5px; height: 10px; margin-right: 6px; }
.quick { display: flex; align-items: center; padding-left: 21px; }
.q { width: 30px; height: 30px; }
.q svg { width: 20px; height: 20px; }
.qc { width: 14px; height: 30px; }
.qc svg { width: 8px; height: 8px; }
.faded { opacity: .5; }
.pressed { background: #b3b3b3; border: 1px solid #777; }
.boxed { border: 1px solid #888; border-left: 0; }
.doc-title { flex: 1; display: flex; align-items: center; justify-content: center; gap: 4px; padding-right: 4px; color: #222; white-space: nowrap; }
.doc-title svg { width: 20px; height: 14px; }
.window-tools { display: flex; align-items: center; color: #444; }
.window-tools button { width: 36px; height: 30px; }
.window-tools button:last-child { width: 32px; }
.window-tools svg { width: 18px; height: 18px; }
.window-tools .avatar svg { width: 24px; height: 24px; }

/* ribbon */
.ribbon { height: 82px; flex: none; display: flex; border-bottom: 1px solid #8a8a8a; background: #f7f7f7; }
.group { display: flex; border-right: 1px solid #c4c4c4; margin-bottom: 3px; }
.group.last { border-right: 0; }
.big { flex-direction: column; justify-content: flex-start; padding-top: 6px; text-align: center; white-space: nowrap; position: relative; }
.big svg { width: 20px; height: 20px; overflow: visible; }
.big .caret { position: absolute; bottom: 6px; left: 50%; margin-left: -4px; width: 8px; height: 8px; }
.w-s { width: 36px; }
.w-m { width: 50px; }
.w-l { width: 66px; }
.w-t { width: 45px; }
.g-dim { padding-left: 2px; }
.stack { display: flex; flex-direction: column; }
.stack button { height: 26px; justify-content: flex-start; white-space: nowrap; gap: 7px; }
.stack button:disabled { color: #b8b8b8; }
.stack svg { width: 20px; height: 20px; }
.s-balloon { width: 114px; padding-left: 4px; }
.s-surface { width: 109px; }
.s-geo { width: 143px; padding-left: 4px; }
.s-center { width: 112px; padding-left: 3px; }
.s-rev { width: 124px; padding-left: 3px; }
.collapse { margin: 60px 9px 0 auto; height: 16px; }
.collapse svg { width: 12px; height: 8px; }

/* workspace */
.workspace { flex: 1; min-height: 0; position: relative; display: flex; flex-direction: column; background: #e6e6da; overflow: hidden; }
.canvas { position: absolute; inset: 0; width: 100%; height: 100%; }
.thin path { fill: none; stroke: #111; }
.solid { fill: #000; }
.outline { fill: none; stroke: #000; stroke-width: 2; }
.picked { stroke: #5f9fe6; fill: none; }
.picked .pickfill { fill: #5aa2f0; }
.picked circle { stroke: #123; }
.picked .handle { fill: #5f9fe6; stroke: #123; }
.dimtxt { font: 37px Lato, sans-serif; text-anchor: middle; fill: #0a0a0a; }
.dimtxt .blue { fill: #69a5e3; }
.dimtxt .zone { font-size: 50px; }
.dimtxt .start { text-anchor: start; }

.topline { position: relative; display: flex; height: 26px; flex: none; margin-bottom: -5px; }
.cmd-tabs { display: flex; width: 531px; height: 21px; border-bottom: 1px solid #8a8a8a; color: #333; }
.cmd-tabs button { flex: 1 1 auto; border-right: 1px solid #8a8a8a; background: #d0d0d0; white-space: nowrap; }
.cmd-tabs .on { background: #f7f7f7; font-weight: 700; }
.heads-up { position: absolute; left: 933px; top: 2px; display: flex; align-items: center; }
.heads-up button { width: 26px; height: 25px; }
.heads-up svg { width: 20px; height: 20px; }
.heads-up .hc { width: 14px; opacity: .5; }
.heads-up .hc svg { width: 8px; height: 8px; }
.heads-up .ball { background: #8c8c8c; border: 1px solid #444; }
.doc-tools { position: absolute; right: 23px; top: 4px; display: flex; color: #929289; }
.doc-tools button { width: 26px; height: 22px; }
.doc-tools svg { width: 17px; height: 17px; }

/* property panel */
.panel { position: relative; width: 230px; flex: 1; background: #f7f7f7; border-right: 1px solid #777; padding: 5px 3px 0 0; color: #111; }
.grip { height: 16px; border-top: 1px solid #b5b5b5; border-bottom: 1px solid #b5b5b5; display: flex; align-items: center; justify-content: center; }
.grip i, .splitter i { width: 6px; height: 6px; border-radius: 50%; border: 1px solid #999; background: #ccc; }
.icon-tabs { display: flex; margin-top: 4px; height: 26px; border-bottom: 1px solid #999; padding-left: 2px; }
.icon-tabs button { width: 40px; height: 26px; background: #d0d0d0; border: 1px solid #999; border-left: 0; }
.icon-tabs .on { background: #f7f7f7; border-bottom-color: #f7f7f7; }
.icon-tabs svg { width: 20px; height: 18px; }
.panel-title { display: flex; align-items: center; height: 32px; margin-bottom: 2px; padding: 0 10px 0 9px; }
.panel-title svg { width: 18px; height: 18px; }
.panel-title h2 { flex: 1; margin-left: 7px; font-weight: 600; }
.panel-title button svg { width: 16px; height: 16px; }
.accept { height: 18px; margin-left: 8px; }
.accept svg { width: 14px; height: 12px; }
.value-tabs { display: flex; height: 25px; margin-top: 14px; border-bottom: 1px solid #999; padding-left: 2px; color: #444; }
.value-tabs button { height: 25px; padding: 0 5px; background: #d0d0d0; border: 1px solid #999; border-left: 0; }
.value-tabs .on { background: #f7f7f7; border-bottom-color: #f7f7f7; }
.sec { margin: 0 5px; border-top: 1px solid #999; padding: 0 1px 0 4px; }
.sec.first { margin-top: 16px; padding-bottom: 10px; }
h3 { display: flex; align-items: center; justify-content: space-between; height: 27px; font-weight: 600; color: #444; padding-right: 1px; }
h3 svg { width: 11px; height: 8px; }
.style-btns { display: flex; padding-left: 30px; }
.style-btns button { width: 24px; height: 24px; border: 1px solid #999; border-right-width: 0; background: #fafafa; }
.style-btns button:last-child { border-right-width: 1px; }
.style-btns svg { width: 20px; height: 20px; }
.pick { position: relative; width: 173px; }
.pick select { appearance: none; width: 100%; height: 21px; border: 1px solid #c4c4c4; border-radius: 2px; background: #fff; font: inherit; color: #111; padding: 0 4px; display: block; }
.pick > svg { position: absolute; right: 4px; top: 8px; width: 10px; height: 6px; pointer-events: none; }
.style-pick { margin: 5px 0 0 35px; }
.frow { display: flex; align-items: center; gap: 13px; margin: 2px 0 11px 2px; }
.frow > svg { width: 20px; height: 20px; overflow: visible; }
.frow + .frow { margin-bottom: 10px; margin-top: 0; }
.cfg { width: 96px; height: 21px; border: 1px solid #c4c4c4; border-radius: 4px; background: #fdfdfd; white-space: nowrap; }
.cfg-a { margin: 0 0 10px 62px; }
.cfg-b { margin: 11px 0 0 57px; }
.tol { padding-bottom: 12px; }
.primary { padding-bottom: 11px; }
.tick { display: flex; align-items: center; gap: 4px; height: 13px; white-space: nowrap; }
.tick input { appearance: none; width: 13px; height: 13px; margin: 0; border: 1px solid #777; border-radius: 3px; background: #fafafa; flex: none; }
.over { margin: 9px 0 0 35px; }
.txt { font: inherit; color: #111; width: 173px; height: 20px; padding: 0 5px 2px; border: 1px solid #ddd; border-bottom-color: #777; background: #fff; border-radius: 2px; display: block; }
.primary > .txt { margin-left: 35px; }
.value-row { display: flex; margin-top: 8px; height: 24px; }
.value-row .txt { width: 151px; height: 23px; margin: 0 2px 0 11px; }
.rev { width: 24px; border: 1px solid #999; background: #fafafa; }
.rev svg { width: 20px; height: 20px; }
.spin { width: 20px; display: flex; flex-direction: column; gap: 1px; }
.spin button { flex: 1; background: #eee; border: 1px solid #ddd; border-right-color: #777; border-bottom-color: #777; }
.spin svg { width: 6px; height: 6px; }

.edit { display: flex; gap: 3px; }
.edit-btns { display: flex; flex-direction: column; gap: 3px; }
.b { width: 24px; height: 24px; border: 1px solid #999; background: #fafafa; }
.b svg { width: 22px; height: 22px; }
.b.on { background: #b3b3b3; border-color: #777; }
.b.focus { background: #e4e4e4; outline: 1px dotted #111; outline-offset: -3px; }
.edit textarea { width: 184px; height: 52px; border: 1px solid #aaa; padding: 0 2px; resize: none; font: inherit; color: #111; margin: 0; display: block; }
.brow { display: grid; grid-template-columns: repeat(6, 24px); width: 152px; justify-content: space-between; margin-top: 2px; }
.brow.place { margin: 8px 0 4px; }
.more { position: relative; }
.upper { margin: 9px 0 12px; }
.dual { padding-top: 7px; font-weight: 600; color: #444; }
.dual .tick { gap: 10px; }
.popup { position: absolute; z-index: 3; left: -1px; top: 24px; width: 156px; height: 88px; background: #f7f7f7; border: 1px solid #666; box-shadow: 3px 3px 6px #0006; font-weight: 400; color: #111; }
.favs { height: 31px; display: flex; background: #e6e6da; border-bottom: 1px solid #ccc; padding-left: 1px; }
.favs button { width: 30px; height: 30px; }
.favs svg { width: 24px; height: 24px; }
.favs .on { background: #eeeee6; border: 1px solid #aaa; box-shadow: inset 0 0 0 2px #fff; }
.popup p { height: 23px; display: flex; align-items: center; padding: 0 0 2px 5px; background: #fff; border-bottom: 1px solid #ccc; }
.popup a { display: flex; align-items: center; height: 32px; padding-left: 4px; gap: 10px; color: #3b5a84; text-decoration: none; }
.popup a svg { width: 20px; height: 20px; }
.popup .mouse { position: absolute; left: 72px; top: 16px; width: 16px; height: 22px; }
.splitter { position: absolute; left: 229px; top: 422px; width: 9px; height: 39px; background: #f7f7f7; border: 1px solid #888; border-left: 0; }

/* enlarged callout */
.callout { position: absolute; left: 325px; top: 333px; width: 346px; height: 542px; background: #f7f7f7; border-right: 1px solid #777; box-shadow: 3px 4px 8px #0007; font-size: 16px; line-height: 20px; }
.large .dim { padding: 0 14px 0 15px; }
.large h3 { height: 41px; padding-right: 0; }
.large h3 svg { width: 16px; height: 12px; }
.large .b { width: 35px; height: 35px; }
.large .b svg { width: 33px; height: 33px; }
.large .b.focus { outline-width: 2px; outline-offset: -4px; }
.large .edit, .large .edit-btns { gap: 5px; }
.large .edit textarea { width: 276px; height: 77px; border-color: #999; padding: 0 3px; line-height: 19px; }
.large .brow { grid-template-columns: repeat(6, 35px); width: 227px; margin-top: 4px; }
.large .brow.place { margin: 12px 0 8px; }
.large .tick { height: 19px; gap: 5px; }
.large .tick input { width: 19px; height: 19px; border-radius: 4px; }
.large .upper { margin: 14px 0 19px; }
.large .dual { margin: 0 7px; padding: 11px 8px 0; border-top: 1px solid #999; }
.large .dual .tick { gap: 15px; }
.large .popup { left: 0; top: 36px; width: 232px; height: 132px; }
.large .favs { height: 46px; padding-left: 0; }
.large .favs button { width: 45px; height: 45px; }
.large .favs svg { width: 36px; height: 36px; }
.large .favs .on { box-shadow: inset 0 0 0 3px #fff; }
.large .popup p { height: 35px; padding: 0 0 1px 8px; }
.large .popup a { height: 49px; padding-left: 6px; gap: 15px; }
.large .popup a svg { width: 30px; height: 30px; }
.large .popup .mouse { left: 106px; top: 24px; width: 24px; height: 33px; }

.vscroll { position: absolute; right: 0; top: 0; bottom: 0; width: 17px; background: #f0f0f0; border-left: 1px solid #fff; }
.vscroll i { position: absolute; left: 7px; top: 41%; height: 30%; width: 3px; background: #8a8a8a; }
.taskpane { position: absolute; right: 0; top: 50px; width: 26px; border: 1px solid #888; border-right: 0; background: #d0d0d0; }
.taskpane button { width: 24px; height: 24px; border-bottom: 1px solid #888; }
.taskpane button:last-child { border-bottom: 0; }
.taskpane .on { background: #fff; }
.taskpane svg { width: 20px; height: 20px; }

/* bottom bars */
.sheetbar { height: 17px; flex: none; display: flex; border-top: 1px solid #8a8a8a; border-bottom: 1px solid #8a8a8a; background: #f7f7f7; }
.sheet { width: 61px; border-right: 1px solid #aaa; font-weight: 700; }
.sheet.add { width: 38px; background: #d6d6d6; }
.sheet.add svg { width: 14px; height: 14px; }
.track { width: 852px; border-right: 4px solid #999; }
.hscroll { flex: 1; background: #f0f0f0; display: flex; align-items: center; padding: 1px 0 0 17px; }
.hscroll i { width: 50%; height: 3px; background: #8a8a8a; }
.status { height: 22px; flex: none; display: flex; align-items: center; padding: 0 4px 0 1px; background: #f7f7f7; white-space: nowrap; }
.st-app { flex: 1; }
.st-def { width: 94px; }
.st-edit { width: 157px; }
.st-scale { width: 45px; }
.st-up { width: 8px; height: 8px; margin-right: 252px; }
.st-unit { width: 53px; }
.st-up2 { width: 8px; height: 8px; margin-right: 34px; }
.st-note { width: 15px; height: 17px; }
```
